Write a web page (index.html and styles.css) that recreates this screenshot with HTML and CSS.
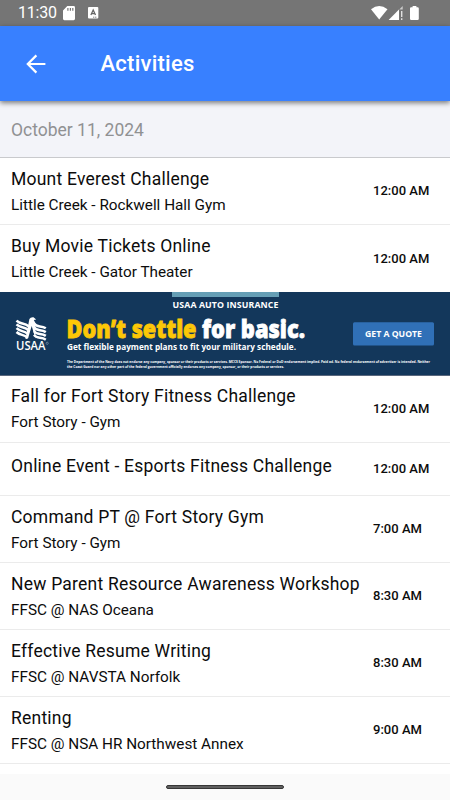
FILE: index.html
```html
<!DOCTYPE html>
<html>
<head>
	<meta charset="UTF-8" />
	<title>Activities</title>
	<link rel="stylesheet" href="styles.css">
</head>
<body>
	<div class="status">
		<span class="clock">11:30</span>
		<svg class="sd" width="12" height="15" viewBox="0 0 12 15"><path fill="#fff" fill-rule="evenodd" d="M4.3 0H10.6Q12 0 12 1.4V12.8Q12 14.2 10.6 14.2H1.4Q0 14.2 0 12.8V4.4ZM4.3 2V4.8H5.5V2ZM6.8 2V4.8H8V2ZM9.2 2V4.8H10.4V2Z"/></svg>
		<svg class="app" width="11" height="12" viewBox="0 0 11 12"><rect width="10.3" height="11.6" rx="1" fill="#fff"/><path d="M2.9 8.1L5.2 3L7.5 8.1M3.7 6.6H6.7" fill="none" stroke="#666" stroke-width="1.3"/><path d="M5 10.2H9" stroke="#888" stroke-width="1" stroke-dasharray="1.2 .6"/></svg>
		<svg class="signals" width="50" height="15" viewBox="0 0 50 15">
			<path fill="#fff" d="M0 3.2Q8.2-3 16.5 3.2L8.2 13.5Z"/>
			<path fill="#fff" d="M17.6 14L28 3.6V14Z"/>
			<path fill="#ccc" d="M28 3.7L31.7 0V3.6H28Z"/>
			<path stroke="#e2e2e2" stroke-width="1.4" d="M30.7 5V11M30.7 12.3V14"/>
			<path fill="#fff" d="M41.6 0H45.4V1.2H46.6Q47.8 1.2 47.8 2.4V12.8Q47.8 14 46.6 14H40.2Q39 14 39 12.8V2.4Q39 1.2 40.2 1.2H41.6Z"/>
		</svg>
	</div>

	<div class="header">
		<svg class="back" width="20" height="20" viewBox="0 0 20 20"><path d="M19.4 10H2M10.4 1.4L1.8 10L10.4 18.6" fill="none" stroke="#fff" stroke-width="2.2"/></svg>
		<h1>Activities</h1>
	</div>

	<div class="date">October 11, 2024</div>

	<div class="list">
		<div class="row">
			<div class="info"><div class="name">Mount Everest Challenge</div><div class="place">Little Creek - Rockwell Hall Gym</div></div>
			<div class="time">12:00 AM</div>
		</div>
		<div class="row last">
			<div class="info"><div class="name">Buy Movie Tickets Online</div><div class="place">Little Creek - Gator Theater</div></div>
			<div class="time">12:00 AM</div>
		</div>
	</div>

	<svg class="banner" width="450" height="84" viewBox="0 0 450 84">
		<rect width="450" height="84" fill="#13375b"/>
		<rect y="83" width="450" height="1" fill="#59677d"/>
		<rect x="172" width="107" height="5" fill="#659eb5"/>
		<!-- eagle -->
		<g fill="none" stroke="#fff" stroke-width="2.5">
			<path d="M16.5 28.6C21 33 23.5 30 29 34.5"/>
			<path d="M16.5 32.4C21 36.8 23.5 33.8 28.5 38.3"/>
			<path d="M16.5 36.2C21 40.6 23.5 37.6 28 42.1"/>
			<path d="M16.5 40C21 44.4 23.5 41.4 27.5 45.9"/>
			<path d="M34 31.5C37 36 41 33 45.8 36.3"/>
			<path d="M34 35.3C37 39.8 41 36.8 45.8 40.1"/>
			<path d="M34 39.1C37 43.6 41 40.6 45.8 43.9"/>
			<path d="M34 42.9C37 47.4 41 44.4 45.8 47.7"/>
		</g>
		<path fill="#fff" d="M25.5 47L29.4 27Q30.5 24.8 33.5 25.2L36.2 27.6L33.8 28L35.4 31V46.5L31.7 34L28 46.5Z"/>
		<text class="usaa" x="16" y="58" textLength="29.5" lengthAdjust="spacingAndGlyphs">USAA</text>
		<circle cx="47.2" cy="51.3" r="1.1" fill="none" stroke="#8fa0b2" stroke-width=".6"/>
		<text class="kicker" x="172.5" y="16.3" textLength="106" lengthAdjust="spacing">USAA AUTO INSURANCE</text>
		<text class="slogan yellow" x="66.5" y="45.7" textLength="130" lengthAdjust="spacingAndGlyphs">Don’t settle</text>
		<text class="slogan" x="202" y="45.7" textLength="103" lengthAdjust="spacingAndGlyphs">for basic.</text>
		<text class="plan" x="67" y="57.5" textLength="229" lengthAdjust="spacingAndGlyphs">Get flexible payment plans to fit your military schedule.</text>
		<text class="legal" x="67" y="71" textLength="363" lengthAdjust="spacingAndGlyphs">The Department of the Navy does not endorse any company, sponsor or their products or services. MCCS Sponsor. No Federal or DoD endorsement implied. Paid ad. No federal endorsement of advertiser is intended. Neither</text>
		<text class="legal" x="67" y="75.7" textLength="217" lengthAdjust="spacingAndGlyphs">the Coast Guard nor any other part of the federal government officially endorses any company, sponsor, or their products or services.</text>
		<rect x="353" y="30.3" width="81" height="23.2" rx="1.5" fill="#3070b7"/>
		<text class="quote" x="365" y="45" textLength="57" lengthAdjust="spacingAndGlyphs">GET A QUOTE</text>
	</svg>

	<div class="list">
		<div class="row">
			<div class="info"><div class="name">Fall for Fort Story Fitness Challenge</div><div class="place">Fort Story - Gym</div></div>
			<div class="time">12:00 AM</div>
		</div>
		<div class="row single">
			<div class="info"><div class="name">Online Event - Esports Fitness Challenge</div></div>
			<div class="time">12:00 AM</div>
		</div>
		<div class="row">
			<div class="info"><div class="name">Command PT @ Fort Story Gym</div><div class="place">Fort Story - Gym</div></div>
			<div class="time">7:00 AM</div>
		</div>
		<div class="row">
			<div class="info"><div class="name">New Parent Resource Awareness Workshop</div><div class="place">FFSC @ NAS Oceana</div></div>
			<div class="time">8:30 AM</div>
		</div>
		<div class="row">
			<div class="info"><div class="name">Effective Resume Writing</div><div class="place">FFSC @ NAVSTA Norfolk</div></div>
			<div class="time">8:30 AM</div>
		</div>
		<div class="row">
			<div class="info"><div class="name">Renting</div><div class="place">FFSC @ NSA HR Northwest Annex</div></div>
			<div class="time">9:00 AM</div>
		</div>
	</div>

	<div class="navbar"><div class="handle"></div></div>
</body>
</html>
```
FILE: styles.css
```css
*{
    box-sizing: border-box;
}

body{
    margin: 0;
    height: 800px;
    display: flex;
    flex-direction: column;
    overflow: hidden;
    background: #fff;
    color: #0c0c0c;
    font-family: Roboto, sans-serif;
}

svg{
    display: block;
    flex: none;
}

.status{
    flex: none;
    height: 26px;
    padding: 0 30px 0 18px;
    display: flex;
    align-items: center;
    background: #757575;
    color: #fff;
}

.clock{
    width: 45px;
    font-size: 16px;
    line-height: 26px;
    letter-spacing: -.2px;
}

.app{
    margin-left: 13px;
}

.signals{
    margin-left: auto;
    margin-right: -1px;
}

.header{
    flex: none;
    height: 75px;
    padding-left: 26px;
    display: flex;
    align-items: center;
    background: #3880ff;
    color: #fff;
    box-shadow: 0 2px 5px rgba(0,0,0,.5);
    z-index: 1;
}

.header h1{
    margin: 0 0 0 54.5px;
    font-size: 22px;
    font-weight: 500;
    letter-spacing: .25px;
}

.date{
    flex: none;
    height: 57px;
    padding-left: 11px;
    line-height: 59px;
    border-bottom: 1px solid #c9cacd;
    background: #f3f4f9;
    color: #909193;
    font-size: 17.5px;
}

.row{
    height: 67.1px;
    padding-left: 11px;
    display: flex;
    border-bottom: 1px solid #ebebeb;
}

.row.last{
    height: 66.9px;
    border-bottom: 0;
}

.row.single{
    height: 53px;
}

.info{
    width: 362px;
    padding-top: 9.5px;
    white-space: nowrap;
}

.single .info{
    padding-top: 11.5px;
}

.name{
    font-size: 17.5px;
    line-height: 22px;
    letter-spacing: .22px;
}

.place{
    margin-top: 5px;
    font-size: 15.3px;
    line-height: 20px;
}

.time{
    align-self: center;
    padding-bottom: 1px;
    font-size: 13px;
    font-weight: 500;
    letter-spacing: .02px;
}

.banner{
    font-family: "Open Sans", sans-serif;
}

.banner text{
    fill: #fff;
    font-weight: 700;
}

.banner .usaa{
    font-size: 12.5px;
    font-weight: 600;
}

.banner .kicker{
    font-size: 8.8px;
    font-weight: 700;
    font-stretch: 90%;
}

.banner .slogan{
    font-size: 25.5px;
    font-weight: 800;
    stroke: #fff;
    stroke-width: .8px;
}

.banner .yellow{
    fill: #fdc707;
    stroke: #fdc707;
}

.banner .plan{
    font-size: 9px;
}

.banner .legal{
    font-size: 4px;
}

.banner .quote{
    font-size: 9px;
}

.navbar{
    flex: none;
    height: 26px;
    margin-top: auto;
    display: flex;
    align-items: center;
    justify-content: center;
    background: #fafafa;
}

.handle{
    width: 118px;
    height: 4px;
    border: 1px solid #373737;
    border-radius: 2px;
    background: #606060;
}
```
